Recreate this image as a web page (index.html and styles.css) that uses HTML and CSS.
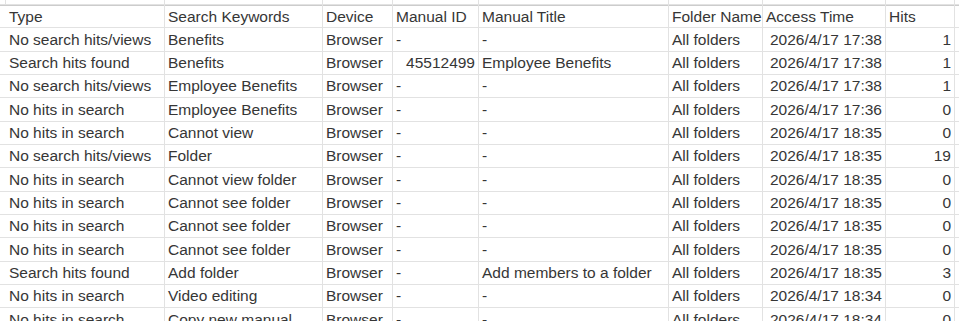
FILE: index.html
```html
<!DOCTYPE html>
<html>
<head>
<meta charset="utf-8">
<link rel="stylesheet" href="styles.css">
</head>
<body>
<div class="sheet">
  <div class="c top"></div><div class="c top"></div><div class="c top"></div><div class="c top"></div><div class="c top"></div><div class="c top"></div><div class="c top"></div><div class="c top"></div><div class="c top"></div><div class="c top"></div>

  <div class="c hd"></div><div class="c hd">Type</div><div class="c hd">Search Keywords</div><div class="c hd">Device</div><div class="c hd">Manual ID</div><div class="c hd">Manual Title</div><div class="c hd">Folder Name</div><div class="c hd">Access Time</div><div class="c hd">Hits</div><div class="c hd"></div>

  <div class="c"></div><div class="c">No search hits/views</div><div class="c">Benefits</div><div class="c">Browser</div><div class="c">-</div><div class="c">-</div><div class="c">All folders</div><div class="c r">2026/4/17 17:38</div><div class="c r">1</div><div class="c"></div>

  <div class="c"></div><div class="c">Search hits found</div><div class="c">Benefits</div><div class="c">Browser</div><div class="c r">45512499</div><div class="c">Employee Benefits</div><div class="c">All folders</div><div class="c r">2026/4/17 17:38</div><div class="c r">1</div><div class="c"></div>

  <div class="c"></div><div class="c">No search hits/views</div><div class="c">Employee Benefits</div><div class="c">Browser</div><div class="c">-</div><div class="c">-</div><div class="c">All folders</div><div class="c r">2026/4/17 17:38</div><div class="c r">1</div><div class="c"></div>

  <div class="c"></div><div class="c">No hits in search</div><div class="c">Employee Benefits</div><div class="c">Browser</div><div class="c">-</div><div class="c">-</div><div class="c">All folders</div><div class="c r">2026/4/17 17:36</div><div class="c r">0</div><div class="c"></div>

  <div class="c"></div><div class="c">No hits in search</div><div class="c">Cannot view</div><div class="c">Browser</div><div class="c">-</div><div class="c">-</div><div class="c">All folders</div><div class="c r">2026/4/17 18:35</div><div class="c r">0</div><div class="c"></div>

  <div class="c"></div><div class="c">No search hits/views</div><div class="c">Folder</div><div class="c">Browser</div><div class="c">-</div><div class="c">-</div><div class="c">All folders</div><div class="c r">2026/4/17 18:35</div><div class="c r">19</div><div class="c"></div>

  <div class="c"></div><div class="c">No hits in search</div><div class="c">Cannot view folder</div><div class="c">Browser</div><div class="c">-</div><div class="c">-</div><div class="c">All folders</div><div class="c r">2026/4/17 18:35</div><div class="c r">0</div><div class="c"></div>

  <div class="c"></div><div class="c">No hits in search</div><div class="c">Cannot see folder</div><div class="c">Browser</div><div class="c">-</div><div class="c">-</div><div class="c">All folders</div><div class="c r">2026/4/17 18:35</div><div class="c r">0</div><div class="c"></div>

  <div class="c"></div><div class="c">No hits in search</div><div class="c">Cannot see folder</div><div class="c">Browser</div><div class="c">-</div><div class="c">-</div><div class="c">All folders</div><div class="c r">2026/4/17 18:35</div><div class="c r">0</div><div class="c"></div>

  <div class="c"></div><div class="c">No hits in search</div><div class="c">Cannot see folder</div><div class="c">Browser</div><div class="c">-</div><div class="c">-</div><div class="c">All folders</div><div class="c r">2026/4/17 18:35</div><div class="c r">0</div><div class="c"></div>

  <div class="c"></div><div class="c">Search hits found</div><div class="c">Add folder</div><div class="c">Browser</div><div class="c">-</div><div class="c">Add members to a folder</div><div class="c">All folders</div><div class="c r">2026/4/17 18:35</div><div class="c r">3</div><div class="c"></div>

  <div class="c"></div><div class="c">No hits in search</div><div class="c">Video editing</div><div class="c">Browser</div><div class="c">-</div><div class="c">-</div><div class="c">All folders</div><div class="c r">2026/4/17 18:34</div><div class="c r">0</div><div class="c"></div>

  <div class="c"></div><div class="c">No hits in search</div><div class="c">Copy new manual</div><div class="c">Browser</div><div class="c">-</div><div class="c">-</div><div class="c">All folders</div><div class="c r">2026/4/17 18:34</div><div class="c r">0</div><div class="c"></div>
</div>
</body>
</html>
```
FILE: styles.css
```css
html, body {
  margin: 0;
  padding: 0;
  background: #ffffff;
  overflow: hidden;
  height: 321px;
}

.sheet {
  display: grid;
  grid-template-columns: 5px 158px 157px 69px 85px 189px 93px 122px 68px 10px;
  grid-template-rows: 4px;
  grid-auto-rows: 22.333px;
  gap: 1px;
  background: #e2e2e2;
  width: 960px;
  font-family: "Liberation Sans", Arial, sans-serif;
  font-size: 15.5px;
  color: #363636;
}

.c {
  background: #ffffff;
  display: flex;
  align-items: center;
  padding: 0 3px;
  white-space: nowrap;
  overflow: visible;
  line-height: 1;
}

.top {
  padding: 0;
}

.hd {
  border-top: 1px solid #cccccc;
}

.r {
  justify-content: flex-end;
}
```
